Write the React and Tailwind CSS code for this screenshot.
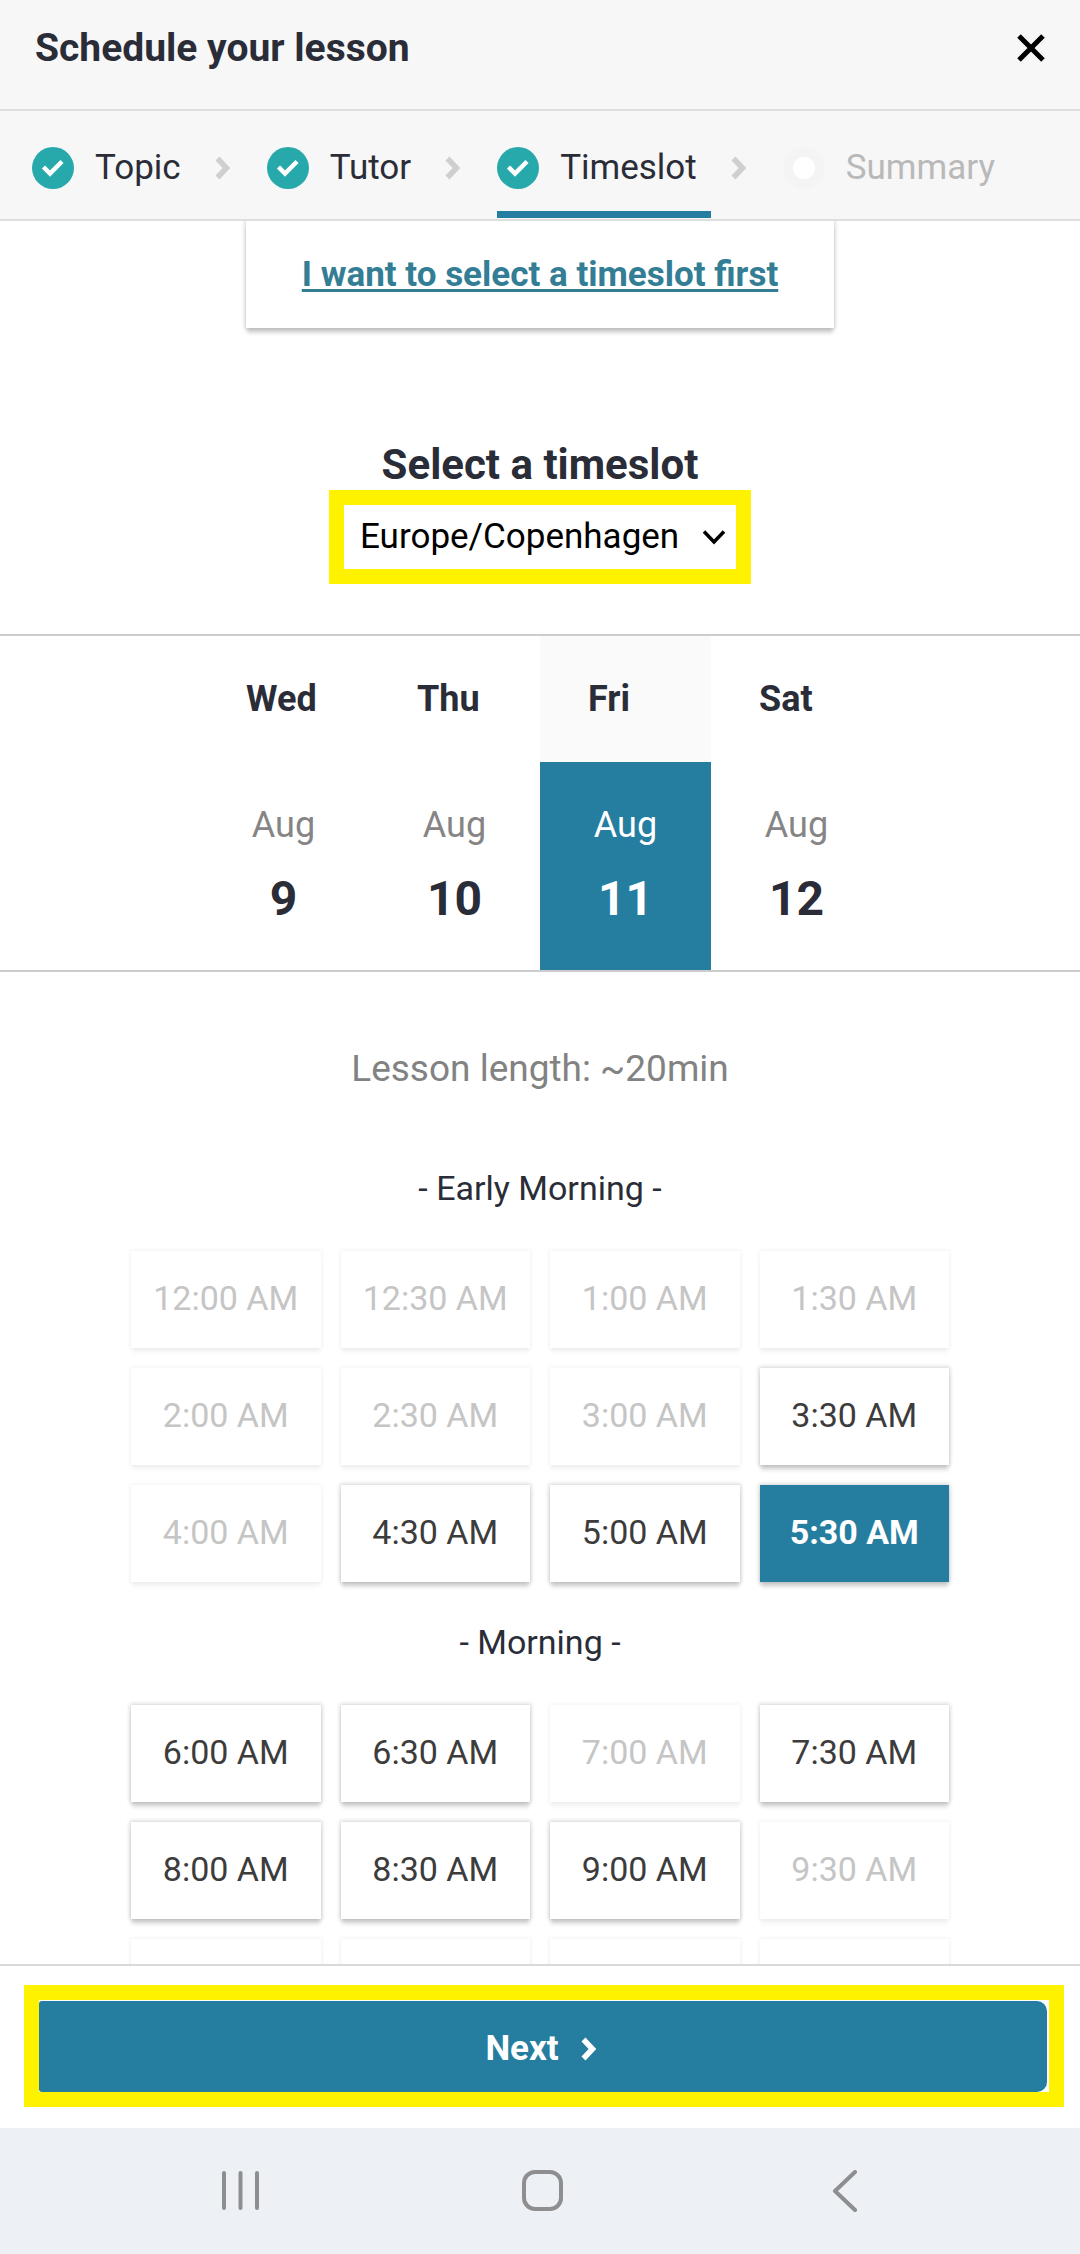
import { useState } from "react";

const steps = [
  { label: "Topic", done: true },
  { label: "Tutor", done: true },
  { label: "Timeslot", done: true, current: true },
  { label: "Summary", done: false },
];

const days = [
  { name: "Wed", month: "Aug", date: 9 },
  { name: "Thu", month: "Aug", date: 10 },
  { name: "Fri", month: "Aug", date: 11 },
  { name: "Sat", month: "Aug", date: 12 },
];

const periods = [
  {
    title: "Early Morning",
    slots: [
      { time: "12:00 AM", open: false },
      { time: "12:30 AM", open: false },
      { time: "1:00 AM", open: false },
      { time: "1:30 AM", open: false },
      { time: "2:00 AM", open: false },
      { time: "2:30 AM", open: false },
      { time: "3:00 AM", open: false },
      { time: "3:30 AM", open: true },
      { time: "4:00 AM", open: false },
      { time: "4:30 AM", open: true },
      { time: "5:00 AM", open: true },
      { time: "5:30 AM", open: true },
    ],
  },
  {
    title: "Morning",
    slots: [
      { time: "6:00 AM", open: true },
      { time: "6:30 AM", open: true },
      { time: "7:00 AM", open: false },
      { time: "7:30 AM", open: true },
      { time: "8:00 AM", open: true },
      { time: "8:30 AM", open: true },
      { time: "9:00 AM", open: true },
      { time: "9:30 AM", open: false },
      // not loaded yet
      { time: "", open: false },
      { time: "", open: false },
      { time: "", open: false },
      { time: "", open: false },
    ],
  },
];

function Chevron({ className }) {
  return (
    <svg viewBox="0 0 16 24" className={className} fill="none" stroke="currentColor" strokeWidth="5.5">
      <path d="M2.5 2.5 L11.5 12 L2.5 21.5" />
    </svg>
  );
}

function StepIcon({ done }) {
  if (!done) {
    return (
      <svg viewBox="0 0 42 42" className="size-[42px] shrink-0">
        <circle cx="21" cy="21" r="21" fill="#f4f4f4" />
        <circle cx="21" cy="21" r="11" fill="#fff" />
      </svg>
    );
  }

  return (
    <svg viewBox="0 0 42 42" className="size-[42px] shrink-0">
      <circle cx="21" cy="21" r="21" fill="#27a9ac" />
      <path d="M11.5 20 L18 26.5 L30 14.5" fill="none" stroke="#fff" strokeWidth="4.5" />
    </svg>
  );
}

function slotClass(slot, selected) {
  if (selected) {
    return "bg-[#257d9f] font-bold text-white shadow-[0_6px_4px_-1px_rgba(0,0,0,0.14),0_0_4px_1px_rgba(0,0,0,0.18)]";
  }
  if (slot.open) {
    return "bg-white text-[#3c3c3c] shadow-[0_6px_4px_-1px_rgba(0,0,0,0.14),0_0_4px_1px_rgba(0,0,0,0.18)]";
  }
  return "bg-white text-[#c5c5c5] shadow-[0_6px_4px_-1px_rgba(0,0,0,0.04),0_0_4px_1px_rgba(0,0,0,0.05)]";
}

export default function App() {
  const [day, setDay] = useState(11);
  const [time, setTime] = useState("5:30 AM");

  return (
    <div className="flex h-screen flex-col overflow-hidden bg-white font-[Roboto,sans-serif] text-[#2a2d37]">
      {/* HEADER */}
      <header className="shrink-0 bg-[#f7f7f7]">
        <div className="flex items-center justify-between border-b-2 border-[#dedede] pt-6 pr-[35px] pb-[37px] pl-[35px]">
          <h1 className="text-[39px] leading-[48px] font-bold">Schedule your lesson</h1>
          <button type="button" aria-label="Close">
            <svg viewBox="0 0 28 28" className="size-7" stroke="#000" strokeWidth="5">
              <path d="M2 2 L26 26 M26 2 L2 26" />
            </svg>
          </button>
        </div>

        <ol className="flex border-b-2 border-[#dedede] pb-px pl-8 text-[35px] leading-[48px]">
          {steps.map((step, i) => (
            <li key={step.label} className="flex">
              {i > 0 && (
                <div className="flex items-center pt-[7px] pr-9 pl-5 text-[#cfcfcf]">
                  <Chevron className="h-6 w-4" />
                </div>
              )}
              <div
                className={`flex items-center gap-[21px] border-b-[7px] pt-[33px] pr-[14px] pb-[19px] ${
                  step.current ? "border-[#257d9f]" : "border-transparent"
                }`}
              >
                <StepIcon done={step.done} />
                <span className={step.done ? "" : "text-[#b9b9b9]"}>{step.label}</span>
              </div>
            </li>
          ))}
        </ol>
      </header>

      {/* CONTENT */}
      <main className="flex min-h-0 flex-1 flex-col overflow-hidden">
        <div className="flex shrink-0 flex-col items-center">
          <div className="bg-white px-14 py-[30px] shadow-[0_6px_4px_-1px_rgba(0,0,0,0.16),0_0_4px_1px_rgba(0,0,0,0.18)]">
            <a
              href="#timeslot"
              className="text-[35px] leading-[47px] font-bold text-[#337d95] underline decoration-[3px] underline-offset-[3px]"
            >
              I want to select a timeslot first
            </a>
          </div>

          <h2 id="timeslot" className="mt-[113px] text-[42px] leading-[48px] font-bold">
            Select a timeslot
          </h2>

          <div className="relative mt-px border-[15px] border-[#fff200]">
            <select
              aria-label="Timezone"
              defaultValue="Europe/Copenhagen"
              className="block h-16 appearance-none bg-white pr-14 pl-4 text-[35px] leading-[48px] text-black"
            >
              <option>Europe/Copenhagen</option>
            </select>
            <svg
              viewBox="0 0 24 16"
              className="pointer-events-none absolute top-6 right-2.5 h-4 w-6"
              fill="none"
              stroke="#000"
              strokeWidth="3.5"
            >
              <path d="M2 2.5 L12 13 L22 2.5" />
            </svg>
          </div>
        </div>

        {/* Days */}
        <div className="mt-[50px] flex shrink-0 justify-center border-y-2 border-[#cccccc]">
          {days.map((d) => {
            const active = d.date === day;
            return (
              <button
                key={d.date}
                type="button"
                aria-pressed={active}
                onClick={() => setDay(d.date)}
                className="w-[171px]"
              >
                <span
                  className={`block py-[39px] pl-12 text-left text-[36px] leading-[48px] font-bold ${
                    active ? "bg-[#fafafa]" : ""
                  }`}
                >
                  {d.name}
                </span>
                <span
                  className={`flex flex-col gap-5 pt-[39px] pb-[41px] ${
                    active ? "bg-[#257d9f] text-white" : ""
                  }`}
                >
                  <span className={`text-[36px] leading-[48px] ${active ? "" : "text-[#858585]"}`}>
                    {d.month}
                  </span>
                  <span className="text-[48px] leading-[60px] font-bold">{d.date}</span>
                </span>
              </button>
            );
          })}
        </div>

        <p className="mt-[73px] mb-[35px] shrink-0 text-center text-[37px] leading-[48px] text-[#828282]">
          Lesson length: ~20min
        </p>

        {/* Time slots */}
        {periods.map((period) => (
          <section key={period.title} className="shrink-0 px-[131px] pt-9 text-[34px] leading-[48px]">
            <h3 className="text-center">- {period.title} -</h3>
            <div className="mt-[39px] grid grid-cols-4 gap-5">
              {period.slots.map((slot, i) => (
                <button
                  key={i}
                  type="button"
                  disabled={!slot.open}
                  onClick={() => setTime(slot.time)}
                  className={`h-[97px] pb-1 ${slotClass(slot, slot.time === time)}`}
                >
                  {slot.time}
                </button>
              ))}
            </div>
          </section>
        ))}
      </main>

      {/* FOOTER */}
      <footer className="relative shrink-0 border-t-2 border-[#d9d9dc] bg-white pt-[19px] pr-4 pb-[21px] pl-6">
        <div className="border-[15px] border-[#fff200] bg-white pt-px pr-0.5">
          <button
            type="button"
            className="flex h-[91px] w-full items-center justify-center gap-[22px] rounded-l-[3px] rounded-r-[10px] bg-[#257d9f] pt-1 pr-1 text-[35px] leading-[48px] font-bold text-white"
          >
            Next
            <Chevron className="h-6 w-4" />
          </button>
        </div>
      </footer>

      {/* System navigation */}
      <nav className="grid h-[126px] shrink-0 grid-cols-3 bg-[#edf0f4] pr-[84px] pl-[90px] text-[#8e8e90]">
        <button type="button" aria-label="Recent apps" className="flex items-center justify-center">
          <svg viewBox="0 0 42 42" className="size-[42px]" fill="none" stroke="currentColor" strokeWidth="4" strokeLinecap="round">
            <path d="M4 3 V38 M20.5 3 V38 M37 3 V38" />
          </svg>
        </button>
        <button type="button" aria-label="Home" className="flex items-center justify-center">
          <svg viewBox="0 0 42 42" className="size-[42px]" fill="none" stroke="currentColor" strokeWidth="4">
            <rect x="2" y="2" width="37" height="37" rx="11" />
          </svg>
        </button>
        <button type="button" aria-label="Back" className="flex items-center justify-center">
          <svg viewBox="0 0 42 42" className="size-[42px]" fill="none" stroke="currentColor" strokeWidth="4" strokeLinecap="round" strokeLinejoin="round">
            <path d="M31 2 L11 21 L31 40" />
          </svg>
        </button>
      </nav>
    </div>
  );
}
